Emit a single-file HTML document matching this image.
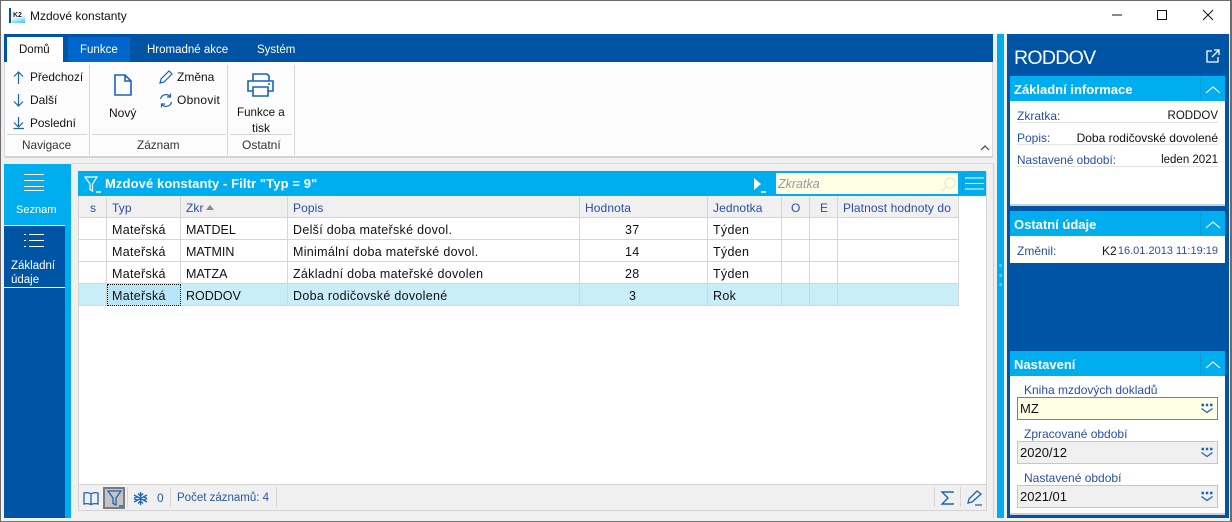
<!DOCTYPE html>
<html><head><meta charset="utf-8"><style>
*{box-sizing:border-box}
html,body{margin:0;padding:0}
body{width:1232px;height:522px;overflow:hidden;background:#f0f0f0;position:relative;font:12px "Liberation Sans",sans-serif;color:#111}
.a{position:absolute}
.t{position:absolute;white-space:nowrap;line-height:16px}
.w{color:#fff}
.b{color:#2a4da8}
svg{position:absolute;overflow:visible;fill:none}
.ic{stroke:#1a63b5;stroke-width:1.2}
.hl{position:absolute;background:#d6d6d6;height:1px}
.vl{position:absolute;background:#d6d6d6;width:1px}
.hd{top:197px;height:22px;color:#2a4da8;line-height:22px;letter-spacing:.1px}
.c{position:absolute;white-space:nowrap;line-height:22px;font-size:12.5px;letter-spacing:.3px;margin-top:1px}
.sec{position:absolute;left:1010px;width:215px;height:25px;background:#00aeef}
.sec b{position:absolute;left:4px;top:5px;font-size:13px;line-height:17px;color:#fff}
.sec i{position:absolute;left:190px;top:2px;width:1px;height:21px;background:#0d98d8}
.sec svg{left:196px;top:10px}
.inp{position:absolute;left:1017px;width:201px;height:23px;border:1px solid #9bd4f2;background:#f0f0f0;font-size:13px;line-height:22px;padding-left:2px}
</style></head><body>
<div class="a" style="left:0;top:0;width:1232px;height:34px;background:#fff;border-top:1px solid #6b6b6b"></div>
<div class="a" style="left:0;top:0;width:1px;height:522px;background:#6b6b6b"></div>
<div class="a" style="left:1230px;top:0;width:2px;height:522px;background:#6b6b6b"></div>
<div class="a" style="left:0;top:521px;width:1232px;height:1px;background:#7a7a7a"></div>

<div class="a" style="left:9px;top:8px;width:2px;height:15px;background:#0054a6"></div>
<div class="a" style="left:12px;top:11px;width:13px;height:12px;background:linear-gradient(165deg,#fff 45%,#39c3ee)"></div>
<div class="t" style="left:13px;top:11px;font-size:7px;font-weight:bold;line-height:9px;color:#123">K2</div>
<div class="t" style="left:30px;top:8px;font-size:12px">Mzdové konstanty</div>
<svg style="left:1100px;top:0" width="132" height="34"><path d="M12 15H22" stroke="#111"/><rect x="57.5" y="10.5" width="9" height="9" stroke="#111"/><path d="M103 10L113 20M113 10L103 20" stroke="#111"/></svg>

<!-- ribbon -->
<div class="a" style="left:4px;top:34px;width:989px;height:28px;background:#0054a6"></div>
<div class="a" style="left:7px;top:37px;width:56px;height:25px;background:#fff"></div>
<div class="a" style="left:68px;top:37px;width:62px;height:25px;background:#0066cc"></div>
<div class="t" style="left:19px;top:42px;font-size:11.5px">Domů</div>
<div class="t w" style="left:80px;top:42px;font-size:11.5px">Funkce</div>
<div class="t w" style="left:147px;top:42px;font-size:11.5px">Hromadné akce</div>
<div class="t w" style="left:257px;top:42px;font-size:11.5px">Systém</div>
<div class="a" style="left:4px;top:62px;width:989px;height:96px;background:#fcfcfc;border:1px solid #d8d8d8;border-top:0;border-bottom:2px solid #d4d4d4"></div>
<div class="a" style="left:89px;top:65px;width:1px;height:90px;background:#d6d6d6"></div>
<div class="a" style="left:227px;top:65px;width:1px;height:90px;background:#d6d6d6"></div>
<div class="a" style="left:294px;top:65px;width:1px;height:90px;background:#d6d6d6"></div>
<div class="a" style="left:7px;top:134px;width:80px;height:1px;background:#d6d6d6"></div>
<div class="a" style="left:92px;top:134px;width:134px;height:1px;background:#d6d6d6"></div>
<div class="a" style="left:230px;top:134px;width:62px;height:1px;background:#d6d6d6"></div>
<svg class="ic" style="left:12px;top:71px" width="16" height="62"><path d="M6.500 1V13M2 5.500L6.500 1L11 5.500M6.500 23V35M2 30.500L6.500 35L11 30.500M6.500 46V56M2 51.500L6.500 56L11 51.500M1.500 57.500H12" /></svg>
<div class="t" style="left:30px;top:69px;font-size:11.8px">Předchozí</div>
<div class="t" style="left:30px;top:92px;font-size:12px">Další</div>
<div class="t" style="left:30px;top:115px;font-size:11.8px">Poslední</div>
<div class="t" style="left:22px;top:137px;font-size:11.8px;color:#333">Navigace</div>
<svg class="ic" style="left:114px;top:74px;stroke-width:1.6" width="18" height="22"><path d="M1 1H11L17 7V21H1ZM11 1V7H17"/></svg>
<div class="t" style="left:109px;top:105px;font-size:12px">Nový</div>
<svg class="ic" style="left:159px;top:70px" width="14" height="14"><path d="M1 13L2 9L10 1L13 4L5 12Z"/></svg>
<svg class="ic" style="left:159px;top:93px" width="14" height="15"><path d="M1.500 6A5.500 5.500 0 0 1 11 3.500M12.500 9A5.500 5.500 0 0 1 3 11.500M11.500 .5V4H8M2.500 14.500V11H6"/></svg>
<div class="t" style="left:177px;top:69px;font-size:12px">Změna</div>
<div class="t" style="left:177px;top:92px;font-size:12px;letter-spacing:.25px">Obnovit</div>
<div class="t" style="left:137px;top:137px;font-size:11.8px;color:#333">Záznam</div>
<svg class="ic" style="left:247px;top:73px;stroke-width:1.6" width="28" height="24"><path d="M6 8V1H20L22 3V8M6 18H1V8H26V18H21M6 14H21V23H6Z"/><path d="M21 11H23"/></svg>
<div class="t" style="left:237px;top:105px;font-size:11.6px">Funkce a</div>
<div class="t" style="left:252px;top:120px;font-size:12px">tisk</div>
<div class="t" style="left:242px;top:137px;font-size:12px;color:#333">Ostatní</div>
<svg style="left:980px;top:145px" width="10" height="6"><path d="M1 5L5 1L9 5" stroke="#444" stroke-width="1.2"/></svg>

<!-- left nav -->
<div class="a" style="left:4px;top:164px;width:67px;height:354px;background:#00aeef"></div>
<div class="a" style="left:4px;top:226px;width:61px;height:292px;background:#0054a6"></div>
<div class="a" style="left:4px;top:225px;width:61px;height:1px;background:#fff"></div>
<div class="a" style="left:4px;top:287px;width:61px;height:1px;background:#fff"></div>
<svg style="left:24px;top:174px" width="20" height="18" stroke="#fff"><path d="M0 .5H20M0 6.500H20M0 12.500H20M0 16.500H20" stroke-width="0.9"/></svg>
<div class="t w" style="left:16px;top:202px;font-size:11px">Seznam</div>
<svg style="left:24px;top:234px" width="20" height="14" stroke="#fff"><path d="M0 .5H2M5 .5H20M0 6.500H2M5 6.500H20M0 12.500H2M5 12.500H20"/></svg>
<div class="t w" style="left:11px;top:258px;font-size:11.500px">Základní</div>
<div class="t w" style="left:11px;top:272px;font-size:11.500px">údaje</div>

<!-- content -->
<div class="a" style="left:71px;top:163px;width:923px;height:355px;background:#f0f0f0;border-top:1px solid #d8d8d8;border-right:1px solid #d0d0d0"></div>
<div class="a" style="left:78px;top:171px;width:909px;height:340px;background:#fff;border-bottom:1px solid #d4d4d4;border-right:1px solid #d4d4d4;border-left:1px solid #d4d4d4"></div>
<div class="a" style="left:78px;top:171px;width:908px;height:25px;background:#00aeef"></div>
<svg style="left:84px;top:176px" width="18" height="18" stroke="#fff"><path d="M1 1H13L8.500 8V15L6 13.500V8Z" stroke-width="1.2"/><path d="M12 16H17" stroke-width="1.500"/></svg>
<div class="t w" style="left:105px;top:176px;font-size:13px;font-weight:bold;letter-spacing:.1px">Mzdové konstanty - Filtr "Typ = 9"</div>
<svg style="left:754px;top:178px" width="14" height="16"><path d="M0 0L7 6L0 12Z" fill="#fff"/><path d="M7 14H12" stroke="#fff" stroke-width="1.500"/></svg>
<div class="a" style="left:776px;top:173px;width:182px;height:21px;background:#ffffe6"></div>
<div class="t" style="left:778px;top:176px;font-style:italic;font-size:12.500px;color:#999">Zkratka</div>
<svg style="left:941px;top:177px" width="15" height="15" stroke="#e5e5c8"><circle cx="9" cy="6" r="5"/><path d="M5 10L1 14"/></svg>
<div class="a" style="left:962px;top:173px;width:1px;height:21px;background:#0d98d8"></div>
<svg style="left:965px;top:177px" width="20" height="14" stroke="#fff"><path d="M0 1H19M0 6.500H19M0 12H19" stroke-width="1.100"/></svg>

<div class="a" style="left:79px;top:196px;width:879px;height:22px;background:#f0f0f0"></div>
<div class="a" style="left:79px;top:284px;width:879px;height:22px;background:#c9eefa"></div>
<div class="hl" style="left:79px;top:217px;width:880px"></div>
<div class="hl" style="left:79px;top:239px;width:880px"></div>
<div class="hl" style="left:79px;top:261px;width:880px"></div>
<div class="hl" style="left:79px;top:283px;width:880px"></div>
<div class="hl" style="left:79px;top:305px;width:880px"></div>
<div class="vl" style="left:106px;top:196px;height:110px"></div>
<div class="vl" style="left:180px;top:196px;height:110px"></div>
<div class="vl" style="left:287px;top:196px;height:110px"></div>
<div class="vl" style="left:579px;top:196px;height:110px"></div>
<div class="vl" style="left:707px;top:196px;height:110px"></div>
<div class="vl" style="left:781px;top:196px;height:110px"></div>
<div class="vl" style="left:809px;top:196px;height:110px"></div>
<div class="vl" style="left:837px;top:196px;height:110px"></div>
<div class="vl" style="left:958px;top:196px;height:110px"></div>
<div class="a" style="left:107px;top:284px;width:74px;height:22px;background:#b8e6f8;border:1px dotted #111"></div>

<div class="t hd" style="left:90px">s</div>
<div class="t hd" style="left:112px">Typ</div>
<div class="t hd" style="left:186px">Zkr</div>
<svg style="left:206px;top:205px" width="9" height="5"><path d="M0 5L4 0L8 5Z" fill="#888"/></svg>
<div class="t hd" style="left:293px">Popis</div>
<div class="t hd" style="left:585px">Hodnota</div>
<div class="t hd" style="left:713px">Jednotka</div>
<div class="t hd" style="left:791px">O</div>
<div class="t hd" style="left:820px">E</div>
<div class="t hd" style="left:843px;letter-spacing:.1px">Platnost hodnoty do</div>

<div class="c" style="left:112px;top:218px">Mateřská</div><div class="c" style="left:186px;top:218px;letter-spacing:0">MATDEL</div><div class="c" style="left:293px;top:218px">Delší doba mateřské dovol.</div><div class="c" style="left:625px;top:218px">37</div><div class="c" style="left:713px;top:218px">Týden</div>
<div class="c" style="left:112px;top:240px">Mateřská</div><div class="c" style="left:186px;top:240px;letter-spacing:0">MATMIN</div><div class="c" style="left:293px;top:240px">Minimální doba mateřské dovol.</div><div class="c" style="left:625px;top:240px">14</div><div class="c" style="left:713px;top:240px">Týden</div>
<div class="c" style="left:112px;top:262px">Mateřská</div><div class="c" style="left:186px;top:262px;letter-spacing:0">MATZA</div><div class="c" style="left:293px;top:262px">Základní doba mateřské dovolen</div><div class="c" style="left:625px;top:262px">28</div><div class="c" style="left:713px;top:262px">Týden</div>
<div class="c" style="left:112px;top:284px">Mateřská</div><div class="c" style="left:186px;top:284px;letter-spacing:0">RODDOV</div><div class="c" style="left:293px;top:284px">Doba rodičovské dovolené</div><div class="c" style="left:629px;top:284px">3</div><div class="c" style="left:713px;top:284px">Rok</div>

<!-- footer -->
<div class="a" style="left:79px;top:484px;width:907px;height:26px;background:#f0f0f0;border-top:1px solid #d4d4d4"></div>
<svg class="ic" style="left:83px;top:492px;stroke-width:1.3" width="16" height="13"><path d="M8 2C6 .5 3 .5 1 1V12C3 11.500 6 11.500 8 12.500C10 11.500 13 11.500 15 12V1C13 .5 10 .5 8 2ZM8 2V12.500"/></svg>
<div class="a" style="left:103px;top:487px;width:22px;height:22px;background:#c4c4c4;border:2px solid #7a7a7a"></div>
<svg class="ic" style="left:107px;top:490px;stroke-width:1.300" width="16" height="17"><path d="M1 1H14L9 8V15L6 13.500V8Z"/><path d="M12 16H16" stroke-width="1.500"/></svg>
<div class="vl" style="left:127px;top:487px;height:20px"></div>
<svg class="ic" style="left:133px;top:491px;stroke-width:1.300" width="15" height="15"><path d="M7.500 1V14M1 4L14 11M14 4L1 11M5 2.500L7.500 5L10 2.500M5 12.500L7.500 10L10 12.500M1 7.500L4 6M14 7.500L11 6M1 7.500L4 9M14 7.500L11 9"/></svg>
<div class="t" style="left:157px;top:490px;color:#1a63b5">0</div>
<div class="vl" style="left:170px;top:487px;height:20px"></div>
<div class="t" style="left:177px;top:490px;color:#2a55a8;font-size:11.500px">Počet záznamů: 4</div>
<div class="vl" style="left:276px;top:487px;height:20px"></div>
<div class="vl" style="left:934px;top:487px;height:20px"></div>
<div class="vl" style="left:960px;top:487px;height:20px"></div>
<svg class="ic" style="left:941px;top:491px;stroke-width:1.400" width="13" height="14"><path d="M12 2V1H1L7 7L1 13H12V12"/></svg>
<svg class="ic" style="left:967px;top:490px;stroke-width:1.300" width="16" height="16"><path d="M1 13L2 9L10 1L14 4L5 12ZM8 15H15"/></svg>

<!-- splitter -->
<div class="a" style="left:997px;top:34px;width:7px;height:484px;background:#00aeef"></div>
<div class="a" style="left:999px;top:264px;width:3px;height:3px;border-radius:2px;background:#55c8f2"></div>
<div class="a" style="left:999px;top:274px;width:3px;height:3px;border-radius:2px;background:#55c8f2"></div>
<div class="a" style="left:999px;top:283px;width:3px;height:3px;border-radius:2px;background:#55c8f2"></div>

<!-- right panel -->
<div class="a" style="left:1007px;top:34px;width:222px;height:484px;background:#0054a6"></div>
<div class="t w" style="left:1014px;top:45px;font-size:19.500px;letter-spacing:-.7px;line-height:26px">RODDOV</div>
<svg style="left:1206px;top:49px" width="14" height="14" stroke="#fff" stroke-width="1.300"><path d="M6 2H1V13H12V8M8 1H13V6M13 1L6 8"/></svg>

<div class="a" style="left:1010px;top:76px;width:215px;height:130px;background:#fff;border-bottom:2px solid #d0d0d0"></div>
<div class="sec" style="top:76px"><b>Základní informace</b><i></i><svg width="14" height="8"><path d="M0 7L7 1L14 7" stroke="#fff" stroke-width="1.100"/></svg></div>
<div class="t b" style="left:1017px;top:108px">Zkratka:</div>
<div class="t" style="right:14px;top:108px;font-size:11.500px">RODDOV</div>
<div class="a" style="left:1017px;top:122px;width:201px;height:1px;background:#e2e2e2"></div>
<div class="t b" style="left:1017px;top:130px">Popis:</div>
<div class="t" style="right:14px;top:130px">Doba rodičovské dovolené</div>
<div class="a" style="left:1017px;top:144px;width:201px;height:1px;background:#e2e2e2"></div>
<div class="t b" style="left:1017px;top:152px;font-size:11.800px">Nastavené období:</div>
<div class="t" style="right:14px;top:152px;font-size:11.500px">leden 2021</div>
<div class="a" style="left:1017px;top:166px;width:201px;height:1px;background:#e2e2e2"></div>

<div class="a" style="left:1010px;top:211px;width:215px;height:52px;background:#fff"></div>
<div class="sec" style="top:211px"><b>Ostatní údaje</b><i></i><svg width="14" height="8"><path d="M0 7L7 1L14 7" stroke="#fff" stroke-width="1.100"/></svg></div>
<div class="t b" style="left:1017px;top:243px">Změnil:</div>
<div class="t" style="left:1102px;top:243px">K2</div>
<div class="t b" style="right:14px;top:243px;font-size:11px">16.01.2013 11:19:19</div>

<div class="a" style="left:1010px;top:351px;width:215px;height:164px;background:#fff;border-bottom:2px solid #d0d0d0"></div>
<div class="sec" style="top:351px"><b>Nastavení</b><i></i><svg width="14" height="8"><path d="M0 7L7 1L14 7" stroke="#fff" stroke-width="1.100"/></svg></div>
<div class="t b" style="left:1024px;top:382px">Kniha mzdových dokladů</div>
<div class="inp" style="top:397px;background:#ffffe6;border-color:#00aeef">MZ</div>
<div class="t b" style="left:1024px;top:426px">Zpracované období</div>
<div class="inp" style="top:441px">2020/12</div>
<div class="t b" style="left:1024px;top:470px">Nastavené období</div>
<div class="inp" style="top:485px">2021/01</div>
<svg style="left:1201px;top:403px" width="12" height="10" stroke="#1a63b5"><path d="M.5 2H3M4.800 2H7.200M9 2H11.500" stroke-width="2.400"/><path d="M.5 5.500L6 9.500L11.500 5.500" stroke-width="1.300"/></svg>
<svg style="left:1201px;top:447px" width="12" height="10" stroke="#1a63b5"><path d="M.5 2H3M4.800 2H7.200M9 2H11.500" stroke-width="2.400"/><path d="M.5 5.500L6 9.500L11.500 5.500" stroke-width="1.300"/></svg>
<svg style="left:1201px;top:491px" width="12" height="10" stroke="#1a63b5"><path d="M.5 2H3M4.800 2H7.200M9 2H11.500" stroke-width="2.400"/><path d="M.5 5.500L6 9.500L11.500 5.500" stroke-width="1.300"/></svg>
</body></html>
